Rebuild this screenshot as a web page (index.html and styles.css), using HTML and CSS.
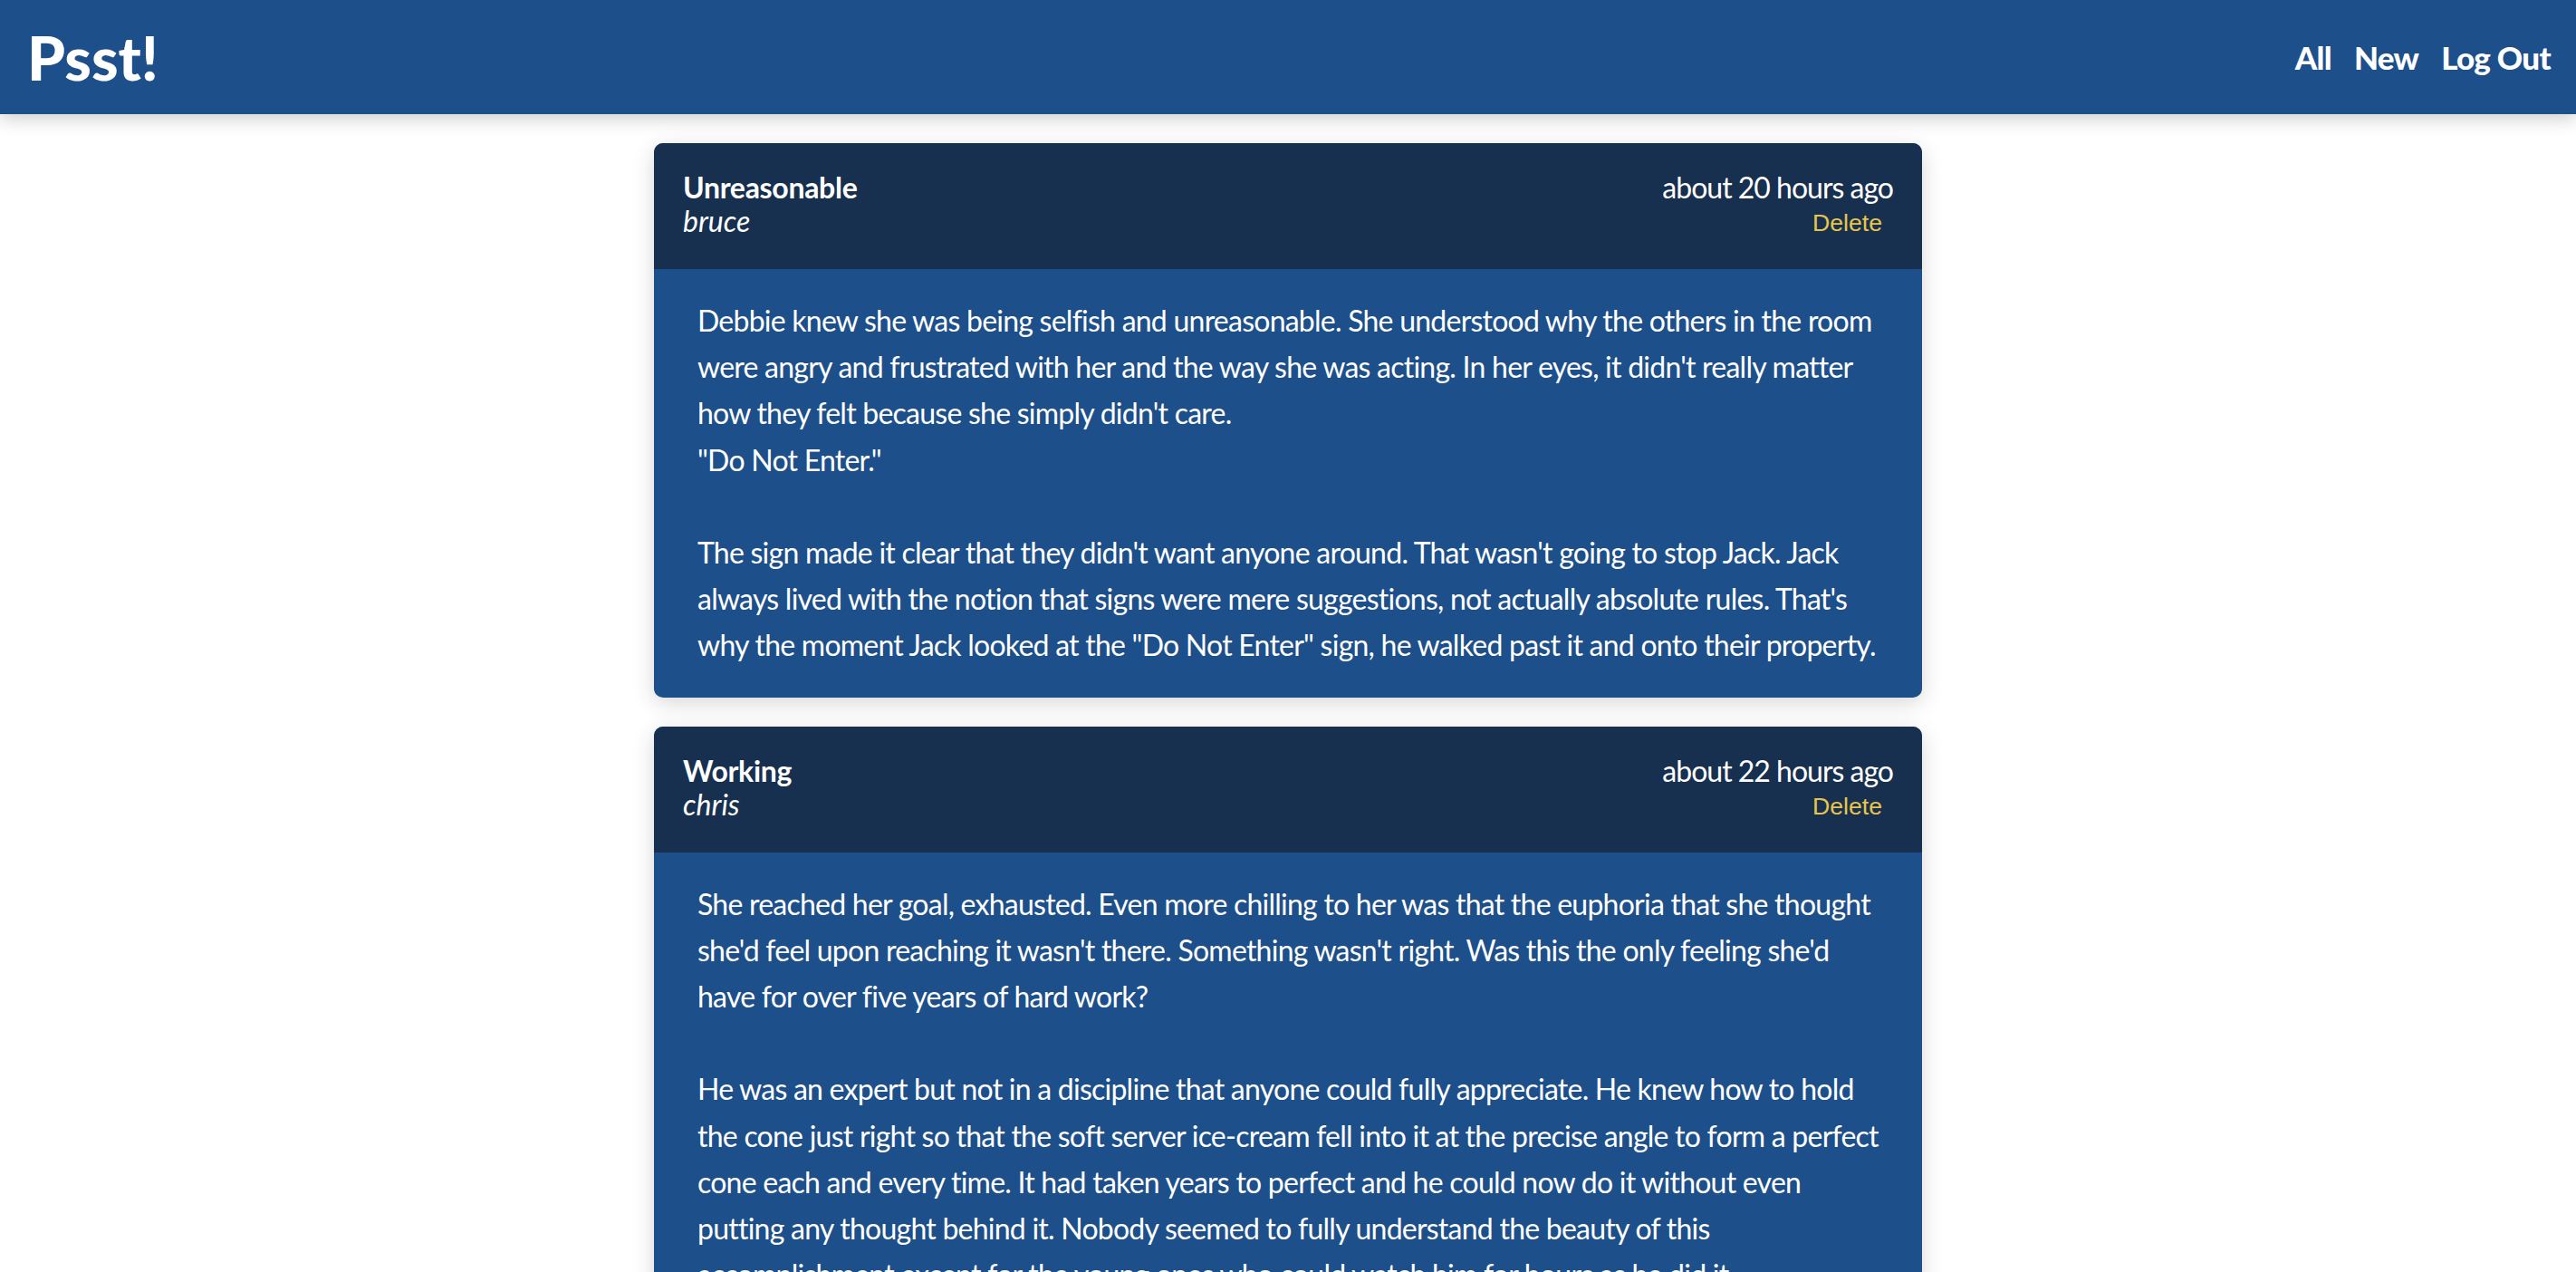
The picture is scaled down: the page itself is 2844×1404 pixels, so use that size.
FILE: index.html
```html
<!DOCTYPE html>
<html lang="en">
<head>
<meta charset="utf-8">
<title>Psst!</title>
<link rel="stylesheet" href="styles.css">
</head>
<body>
<header class="navbar">
  <a class="brand" href="#">Psst!</a>
  <nav class="nav">
    <a class="nav-link" href="#">All</a>
    <a class="nav-link" href="#">New</a>
    <a class="nav-link" href="#">Log Out</a>
  </nav>
</header>
<main class="feed">
  <article class="post">
    <div class="post-head">
      <div class="post-meta">
        <div class="post-title">Unreasonable</div>
        <div class="post-author">bruce</div>
      </div>
      <div class="post-side">
        <div class="post-time">about 20 hours ago</div>
        <button class="post-delete" type="button">Delete</button>
      </div>
    </div>
    <div class="post-body">Debbie knew she was being selfish and unreasonable. She understood why the others in the room
were angry and frustrated with her and the way she was acting. In her eyes, it didn't really matter
how they felt because she simply didn't care.
"Do Not Enter."

The sign made it clear that they didn't want anyone around. That wasn't going to stop Jack. Jack
always lived with the notion that signs were mere suggestions, not actually absolute rules. That's
why the moment Jack looked at the "Do Not Enter" sign, he walked past it and onto their property.</div>
  </article>
  <article class="post">
    <div class="post-head">
      <div class="post-meta">
        <div class="post-title">Working</div>
        <div class="post-author">chris</div>
      </div>
      <div class="post-side">
        <div class="post-time">about 22 hours ago</div>
        <button class="post-delete" type="button">Delete</button>
      </div>
    </div>
    <div class="post-body">She reached her goal, exhausted. Even more chilling to her was that the euphoria that she thought
she'd feel upon reaching it wasn't there. Something wasn't right. Was this the only feeling she'd
have for over five years of hard work?

He was an expert but not in a discipline that anyone could fully appreciate. He knew how to hold
the cone just right so that the soft server ice-cream fell into it at the precise angle to form a perfect
cone each and every time. It had taken years to perfect and he could now do it without even
putting any thought behind it. Nobody seemed to fully understand the beauty of this
accomplishment except for the young ones who could watch him for hours as he did it.</div>
  </article>
</main>
</body>
</html>
```

FILE: styles.css
```css
* { box-sizing: border-box; }

html, body {
  margin: 0;
  padding: 0;
  background: #ffffff;
}

body {
  font-family: Lato, "Noto Sans", "Liberation Sans", sans-serif;
  color: #ffffff;
}

.navbar {
  height: 126px;
  background: #1d4f8a;
  display: flex;
  align-items: center;
  justify-content: space-between;
  padding: 0 28px 0 30px;
  box-shadow: 0 6px 18px rgba(0, 0, 0, 0.18);
  position: relative;
  z-index: 1;
}

.brand {
  color: #ffffff;
  text-decoration: none;
  font-weight: 900;
  font-size: 67px;
  letter-spacing: 0;
}

.nav {
  display: flex;
  gap: 25px;
}

.nav-link {
  color: #ffffff;
  text-decoration: none;
  font-weight: 900;
  font-size: 35px;
  letter-spacing: -0.7px;
}

.feed {
  width: 1400px;
  margin: 32px auto 0;
  display: flex;
  flex-direction: column;
  gap: 32px;
}

.post {
  border-radius: 10px;
  overflow: hidden;
  background: #1d4f8a;
  box-shadow: 0 6px 24px rgba(0, 0, 0, 0.16);
}

.post-head {
  background: #17304f;
  display: flex;
  justify-content: space-between;
  padding: 30px 32px 34px 32px;
  font-size: 32px;
  line-height: 37px;
}

.post-title {
  font-weight: 700;
  letter-spacing: -0.3px;
}

.post-author {
  font-style: italic;
}

.post-side {
  display: flex;
  flex-direction: column;
  align-items: flex-end;
}

.post-time {
  letter-spacing: -1px;
}

.post-delete {
  font-family: "Liberation Sans", Arial, sans-serif;
  font-size: 26.67px;
  color: #e8c44c;
  background: transparent;
  border: 0;
  margin-top: 4px;
  padding: 2px 12px;
  line-height: 30px;
  cursor: pointer;
}

.post-body {
  padding: 31px 16px 32px 48px;
  font-size: 32px;
  line-height: 51.2px;
  white-space: pre-line;
  letter-spacing: -0.76px;
}
```
